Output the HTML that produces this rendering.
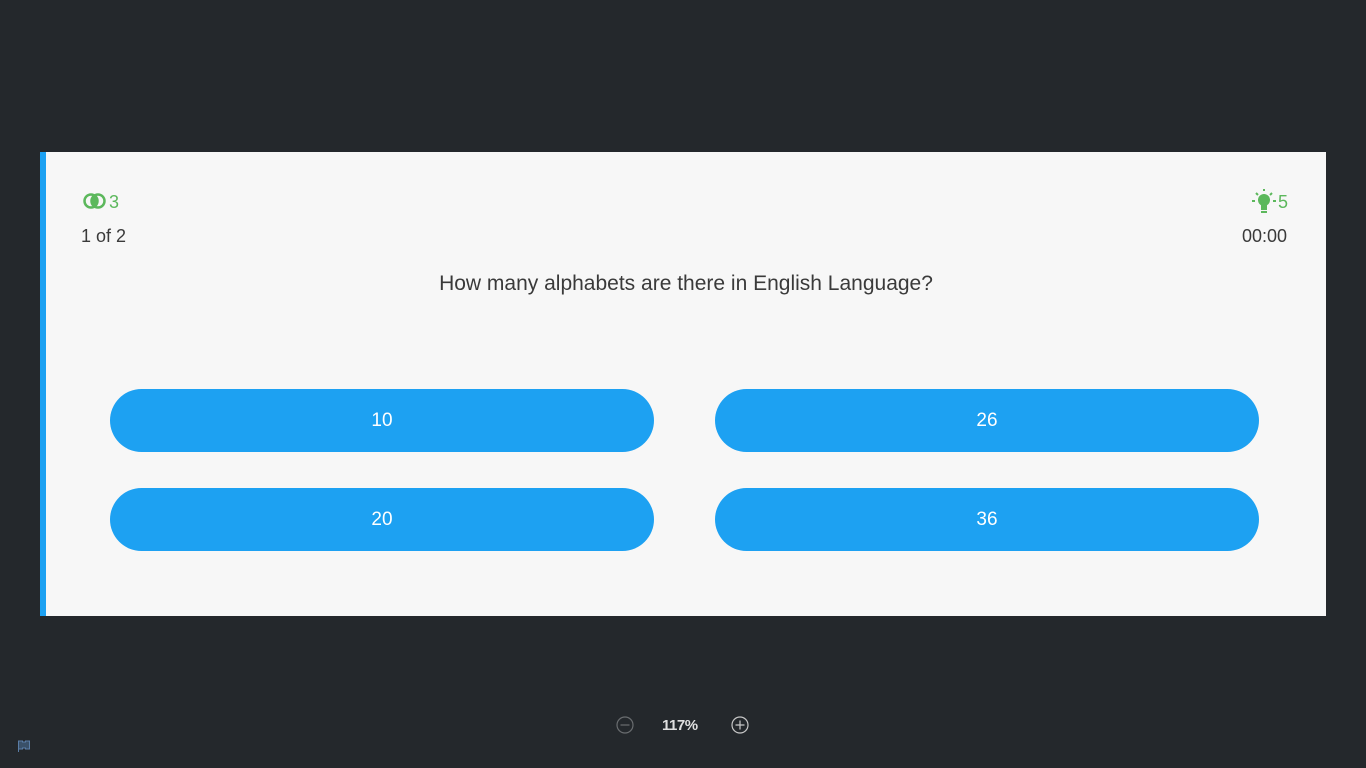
<!DOCTYPE html>
<html><head><meta charset="utf-8"><style>
body{margin:0;width:1366px;height:768px;background:#24282c;font-family:"Liberation Sans",sans-serif;position:relative;overflow:hidden}
.card{position:absolute;left:40px;top:152px;width:1286px;height:464px;background:#f7f7f7;border-left:6px solid #1da1f2;box-sizing:border-box}
.t{position:absolute;color:#3a3a3a;font-size:18px}
.g{color:#5cb85c;font-size:18px;position:absolute}
.btn{position:absolute;width:544px;height:63px;border-radius:32px;background:#1da1f2;color:#fff;font-size:19px;text-align:center;line-height:63px}
</style></head><body>
<div class="card">
<svg style="position:absolute;left:37px;top:40px" width="24" height="18" viewBox="0 0 24 18"><circle cx="8" cy="9" r="6.5" fill="none" stroke="#5cb85c" stroke-width="2.5"/><circle cx="15" cy="9" r="6.5" fill="none" stroke="#5cb85c" stroke-width="2.5"/><path d="M11.5 3.5a6.5 6.5 0 0 1 0 11a6.5 6.5 0 0 1 0-11z" fill="#5cb85c"/></svg>
<div class="g" style="left:63px;top:40px">3</div>
<div class="t" style="left:35px;top:74px">1 of 2</div>
<svg style="position:absolute;left:1204px;top:36px" width="28" height="28" viewBox="0 0 28 28"><circle cx="14" cy="12" r="6" fill="#5cb85c"/><rect x="11" y="16" width="6" height="6" fill="#5cb85c"/><rect x="11" y="23" width="6" height="2" fill="#5cb85c"/><g stroke="#5cb85c" stroke-width="2"><path d="M2 13h3M23 13h3M6 5l2 2M22 5l-2 2M14 1v2"/></g></svg>
<div class="g" style="left:1232px;top:40px">5</div>
<div class="t" style="left:1196px;top:74px">00:00</div>
<div class="t" style="left:0;width:1280px;text-align:center;top:120px;font-size:21px">How many alphabets are there in English Language?</div>
<div class="btn" style="left:64px;top:237px">10</div>
<div class="btn" style="left:669px;top:237px">26</div>
<div class="btn" style="left:64px;top:336px">20</div>
<div class="btn" style="left:669px;top:336px">36</div>
</div>
<svg style="position:absolute;left:616px;top:716px" width="18" height="18" viewBox="0 0 18 18"><circle cx="9" cy="9" r="8" fill="none" stroke="#6a6d70" stroke-width="1.2"/><path d="M4.5 9h9" stroke="#6a6d70" stroke-width="1.2"/></svg>
<div style="position:absolute;left:662px;top:717px;color:#e0e0e0;font-size:15px;font-weight:bold;letter-spacing:-0.5px">117%</div>
<svg style="position:absolute;left:731px;top:716px" width="18" height="18" viewBox="0 0 18 18"><circle cx="9" cy="9" r="8" fill="none" stroke="#c8c8c8" stroke-width="1.2"/><path d="M4.5 9h9M9 4.5v9" stroke="#c8c8c8" stroke-width="1.2"/></svg>
<svg style="position:absolute;left:17px;top:739px" width="14" height="14" viewBox="0 0 14 14"><path d="M1.5 13V2h4v1h3V2h4v8h-4V9h-3v1h-4" fill="#3a5068" stroke="#5a7da6" stroke-width="1"/></svg>
</body></html>
